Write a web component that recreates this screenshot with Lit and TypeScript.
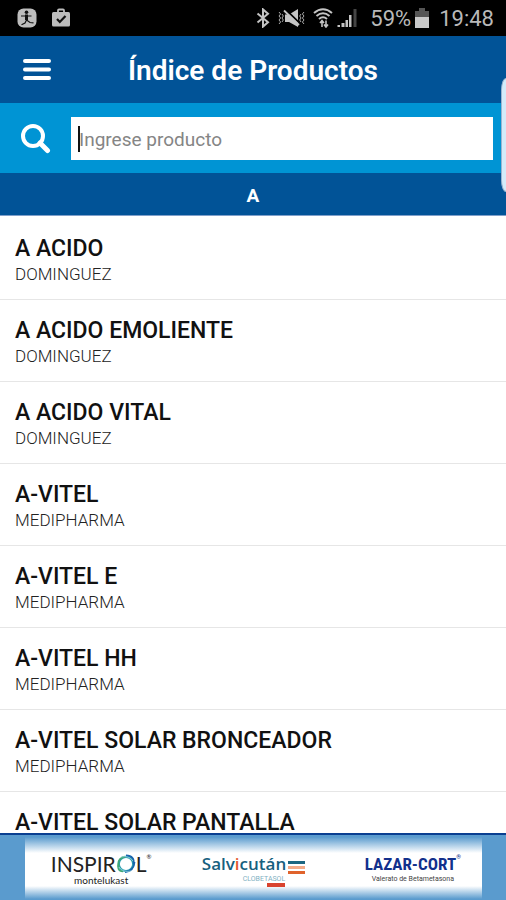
import { LitElement, html, css, nothing } from "lit";
import { customElement } from "lit/decorators.js";

interface Product {
  name: string;
  lab?: string;
}

const PRODUCTS: Product[] = [
  { name: "A ACIDO", lab: "DOMINGUEZ" },
  { name: "A ACIDO EMOLIENTE", lab: "DOMINGUEZ" },
  { name: "A ACIDO VITAL", lab: "DOMINGUEZ" },
  { name: "A-VITEL", lab: "MEDIPHARMA" },
  { name: "A-VITEL E", lab: "MEDIPHARMA" },
  { name: "A-VITEL HH", lab: "MEDIPHARMA" },
  { name: "A-VITEL SOLAR BRONCEADOR", lab: "MEDIPHARMA" },
  { name: "A-VITEL SOLAR PANTALLA" },
];

@customElement("status-bar")
class StatusBar extends LitElement {
  static styles = css`
    :host {
      display: flex;
      justify-content: space-between;
      align-items: center;
      height: 36px;
      padding: 0 12px 0 17px;
      background: #000;
      color: #b9b9b9;
      font-size: 22px;
      line-height: 24px;
    }
    .group {
      display: flex;
      align-items: center;
    }
    .left {
      gap: 14px;
    }
    .signals {
      gap: 8px;
      margin-right: 13px;
    }
    .network {
      gap: 4px;
    }
    .text {
      padding-top: 2px;
    }
    .battery {
      margin: 0 10px 0 4px;
    }
    svg {
      display: block;
    }
  `;

  render() {
    return html`
      <div class="group left">
        <svg width="20" height="20" viewBox="0 0 20 20" aria-hidden="true">
          <rect x="0.5" y="0.5" width="19" height="19" rx="6" fill="#bdbdbd" />
          <circle cx="9.5" cy="4.2" r="1.8" fill="#111" />
          <path d="M4 8H14.500M9.500 7V12L13 14.500L16.500 14.800M9.500 12L8 15L4.500 16.800" fill="none" stroke="#111" stroke-width="1.2" />
          <path d="M8 6.500h3v5.500h-3z" fill="#111" />
        </svg>
        <svg width="20" height="20" viewBox="0 0 20 20" aria-hidden="true">
          <path d="M7 5V2.500Q7 1.500 8 1.500H12Q13 1.500 13 2.500V5" fill="none" stroke="#bdbdbd" stroke-width="1.8" />
          <rect x="1" y="4" width="18" height="14.500" rx="1.5" fill="#bdbdbd" />
          <path d="M6 11L8.800 14L14.500 8" fill="none" stroke="#111" stroke-width="2.200" />
        </svg>
      </div>
      <div class="group">
        <div class="group signals">
          <svg width="14" height="20" viewBox="0 0 14 20" aria-hidden="true">
            <path d="M1.500 5.500L12 14.200L7 18.600V1.400L12 5.800L1.500 14.500" fill="none" stroke="#c4c4c4" stroke-width="2" />
          </svg>
          <svg width="27" height="20" viewBox="0 0 27 20" aria-hidden="true">
            <path d="M7 6.500H11L20 1V19L11 14H7Z" fill="#c4c4c4" />
            <path d="M7 1L22 15.500" stroke="#000" stroke-width="1.800" />
            <path d="M6 2.500L21 17" stroke="#c4c4c4" stroke-width="1.800" />
            <path d="M1 4l1.600 2L1 8l1.600 2L1 12l1.600 2L1 16M4 6l1.300 2-1.300 2 1.300 2-1.300 2M26 4l-1.600 2L26 8l-1.600 2L26 12l-1.600 2L26 16M23 6l-1.300 2 1.300 2-1.300 2 1.300 2" fill="none" stroke="#a8a8a8" stroke-width="1" />
          </svg>
          <div class="group network">
            <svg width="20" height="20" viewBox="0 0 20 20" aria-hidden="true">
              <path d="M1 5Q10-2.500 19 5M3.500 8Q10 2.500 16.500 8M6 11Q10 7.500 14 11" fill="none" stroke="#c4c4c4" stroke-width="2" />
              <path d="M9 19V13M7 15L9 12.500L11 15M13 12.500V18.500M11 16.500L13 19L15 16.500" fill="none" stroke="#c4c4c4" stroke-width="1.600" />
            </svg>
            <svg width="20" height="20" viewBox="0 0 20 20" aria-hidden="true">
              <path d="M0.500 17H3V19H0.500ZM4.500 15H7.500V19H4.500ZM8.500 12H11V19H8.500ZM12 7H14.500V19H12Z" fill="#c4c4c4" />
              <path d="M16.500 1H19.500V19H16.500Z" fill="#444" />
            </svg>
          </div>
        </div>
        <span class="text">59%</span>
        <svg class="battery" width="14" height="20" viewBox="0 0 14 20" aria-hidden="true">
          <path d="M4 0H10V3H14V9H0V3H4Z" fill="#555" />
          <path d="M0 9H14V20H0Z" fill="#c9c9c9" />
        </svg>
        <span class="text">19:48</span>
      </div>
    `;
  }
}

@customElement("sponsor-banner")
class SponsorBanner extends LitElement {
  static styles = css`
    :host {
      display: block;
      border-top: 2px solid #0a3f91;
      background: #5a9bce;
      padding: 0 24px 0 25px;
    }
    .panel {
      display: grid;
      grid-template-columns: repeat(3, 1fr);
      align-items: start;
      justify-items: center;
      box-sizing: border-box;
      height: 65px;
      padding-top: 18px;
      background: linear-gradient(#5a9bce 2px, #fff 18px, #fff 51px, #5a9bce 64px);
    }
    .brand {
      display: flex;
      flex-direction: column;
      align-items: center;
      color: #222;
      text-decoration: none;
      white-space: nowrap;
    }
    .name {
      display: flex;
      align-items: center;
      height: 22px;
    }
    .sub {
      font-size: 7px;
      line-height: 8px;
    }
    .reg {
      align-self: flex-start;
      font-size: 6px;
      line-height: 8px;
    }
    .inspirol {
      font-family: Lato, sans-serif;
    }
    .inspirol .name {
      font-size: 21px;
      line-height: 22px;
    }
    .inspirol .sub {
      font-size: 10px;
      line-height: 10px;
    }
    .salvicutan .name {
      font: 600 17px/22px "Open Sans", sans-serif;
      color: #17607e;
      gap: 2px;
    }
    .salvicutan .sub {
      align-self: flex-end;
      margin-right: 20px;
      color: #7fb0c2;
    }
    .salvicutan svg {
      align-self: flex-end;
    }
    .tag {
      align-self: flex-end;
      margin-right: 20px;
      width: 18px;
      height: 4px;
      background: #d9432f;
    }
    .accent {
      color: #e4572e;
    }
    .lazar {
      padding-left: 14px;
    }
    .lazar .name {
      font: 700 17px/22px "Liberation Sans Narrow", "Roboto Condensed", Roboto, sans-serif;
      color: #12308c;
    }
    .lazar .sub {
      color: #444;
    }
    svg {
      display: block;
      flex: none;
    }
  `;

  render() {
    return html`
      <div class="panel">
        <a class="brand inspirol" href="#inspirol">
          <span class="name"
            ><span>INSPIR</span
            ><svg width="20" height="20" viewBox="0 0 20 20" aria-hidden="true">
              <circle cx="10" cy="10" r="7.200" fill="none" stroke="#2b9fb0" stroke-width="2.200" />
              <path d="M3 13Q0 5 9 2.500M7 17.500Q0 17 2.500 8" fill="none" stroke="#3fa773" stroke-width="1.500" />
              <path d="M10 1.500Q19 2 17.500 10M18.500 8Q18 17 9 18" fill="none" stroke="#1765ae" stroke-width="1.800" />
              <path d="M5 3Q13 1 17 7M15 17Q7 19 3 13" fill="none" stroke="#9ad6dc" stroke-width="0.800" />
            </svg><span>L</span><span class="reg">®</span></span>
          <span class="sub">montelukast</span>
        </a>
        <a class="brand salvicutan" href="#salvicutan">
          <span class="name"
            ><span>Salv<span class="accent">i</span>cután</span
            ><svg width="17" height="14" viewBox="0 0 17 14" aria-hidden="true">
              <path d="M0 0H17V3H0Z" fill="#1c6681" />
              <path d="M0 5H17V8H0Z" fill="#f4ab88" />
              <path d="M0 10H17V13H0Z" fill="#e0632c" />
            </svg></span>
          <span class="sub">CLOBETASOL</span>
          <i class="tag"></i>
        </a>
        <a class="brand lazar" href="#lazar-cort">
          <span class="name"><span>LAZAR-CORT</span><span class="reg">®</span></span>
          <span class="sub">Valerato de Betametasona</span>
        </a>
      </div>
    `;
  }
}

@customElement("app-root")
class AppRoot extends LitElement {
  static styles = css`
    :host {
      display: flex;
      flex-direction: column;
      position: relative;
      height: 100vh;
      overflow: hidden;
      background: #fff;
      font-family: Roboto, sans-serif;
      color: #111;
    }
    status-bar,
    header,
    .search,
    .letter,
    sponsor-banner {
      flex: none;
    }
    header {
      display: grid;
      grid-template-columns: 60px 1fr 60px;
      align-items: center;
      height: 67px;
      background: #015397;
    }
    .menu {
      justify-self: end;
      padding: 8px 9px;
      border: 0;
      background: none;
    }
    svg {
      display: block;
    }
    h1 {
      margin: 0;
      padding-top: 2px;
      text-align: center;
      font-size: 28px;
      line-height: 36px;
      font-weight: 600;
      color: #fff;
    }
    .search {
      display: flex;
      align-items: center;
      height: 70px;
      padding: 0 13px 0 20px;
      gap: 20px;
      background: #0094d4;
    }
    .field {
      position: relative;
      flex: 1;
      height: 43px;
    }
    input {
      box-sizing: border-box;
      width: 100%;
      height: 100%;
      padding: 2px 8px 0;
      border: 0;
      border-radius: 0;
      outline: 0;
      background: #fff;
      font: 19px Roboto, sans-serif;
      color: #111;
    }
    input::placeholder {
      color: #858585;
      opacity: 1;
    }
    .caret {
      position: absolute;
      left: 7px;
      top: 9px;
      width: 2px;
      height: 26px;
      background: #111;
    }
    .letter {
      margin: 0;
      height: 42px;
      border-bottom: 1px solid #7f9fca;
      background: #015397;
      color: #fff;
      text-align: center;
      font-size: 19px;
      line-height: 46px;
      font-weight: 700;
    }
    ul {
      flex: 1;
      min-height: 0;
      margin: 0;
      padding: 2px 0 0;
      overflow: hidden;
      list-style: none;
    }
    li {
      display: flex;
      flex-direction: column;
      box-sizing: border-box;
      height: 82px;
      padding: 20px 15px 0;
      border-bottom: 1px solid #e6e6e6;
    }
    .name {
      font-size: 23px;
      line-height: 22px;
      font-weight: 500;
    }
    .lab {
      padding-top: 4px;
      font-size: 17px;
      line-height: 20px;
      color: #222;
      font-weight: 300;
    }
    .edge {
      position: absolute;
      right: 0;
      top: 78px;
      width: 5px;
      height: 114px;
      box-sizing: border-box;
      border: 1px solid #9ab4d0;
      border-right: 0;
      border-radius: 5px 0 0 5px / 12px 0 0 12px;
      background: #d3ebfa;
    }
  `;

  render() {
    return html`
      <status-bar></status-bar>
      <header>
        <button class="menu" aria-label="Menú">
          <svg width="28" height="22" viewBox="0 0 28 22" aria-hidden="true">
            <path d="M2 2H26M2 10.500H26M2 19H26" stroke="#fff" stroke-width="4" stroke-linecap="round" />
          </svg>
        </button>
        <h1>Índice de Productos</h1>
      </header>
      <div class="search">
        <svg width="31" height="31" viewBox="0 0 31 31" aria-hidden="true">
          <circle cx="13" cy="13" r="10" fill="none" stroke="#fff" stroke-width="4" />
          <path d="M20 20L27.500 27.500" stroke="#fff" stroke-width="5" stroke-linecap="round" />
        </svg>
        <div class="field">
          <input type="text" placeholder="Ingrese producto" aria-label="Ingrese producto" />
          <span class="caret"></span>
        </div>
      </div>
      <h2 class="letter">A</h2>
      <ul>
        ${PRODUCTS.map(
          (p) => html`<li>
            <span class="name">${p.name}</span>
            ${p.lab ? html`<span class="lab">${p.lab}</span>` : nothing}
          </li>`
        )}
      </ul>
      <sponsor-banner></sponsor-banner>
      <div class="edge"></div>
    `;
  }
}
